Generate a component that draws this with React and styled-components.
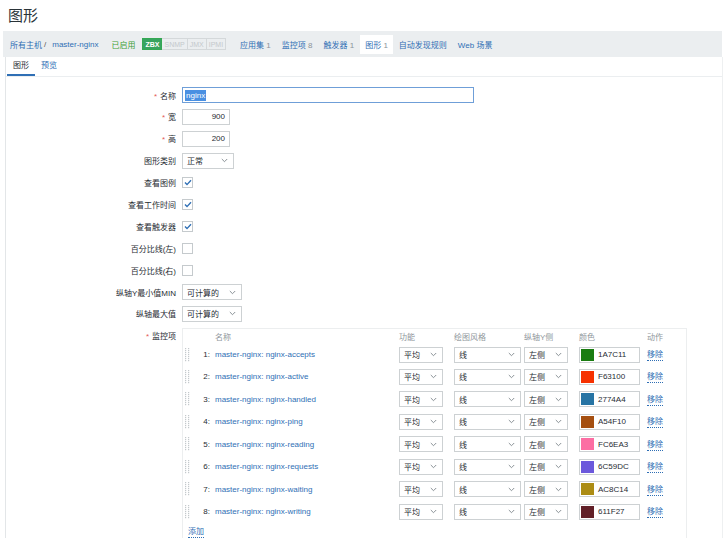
import React from "react";
import styled, { createGlobalStyle } from "styled-components";

const Global = createGlobalStyle`
  html, body { margin: 0; padding: 0; background: #ffffff; }
  body {
    font-family: "Liberation Sans", Arial, "Noto Sans CJK SC", sans-serif;
    font-size: 8px;
    color: #1f2c33;
    width: 725px;
    height: 538px;
    overflow: hidden;
  }
  * { box-sizing: border-box; }
`;

const Page = styled.div`
  width: 725px;
  height: 538px;
  overflow: hidden;
  display: flex;
  flex-direction: column;
  & > * { flex-shrink: 0; }
`;

const Title = styled.h1`
  margin: 0;
  height: 31px;
  padding: 7px 0 0 8px;
  font-size: 15px;
  line-height: 18px;
  font-weight: normal;
  color: #2a3338;
`;

const NavBar = styled.div`
  margin: 0 3px;
  height: 26px;
  background: #ebeef0;
  display: flex;
  align-items: center;
  padding-left: 7px;
  white-space: nowrap;
`;

const Crumb = styled.span`
  color: #2f6fb5;
`;

const Sep = styled.span`
  color: #555;
  margin: 0 6px 0 2px;
`;

const Status = styled.span`
  color: #3f9e3a;
  margin-left: 13px;
`;

const Badges = styled.div`
  display: flex;
  margin-left: 7px;
`;

const Badge = styled.span`
  height: 12px;
  line-height: 11px;
  padding: 0 2px;
  font-size: 7px;
  border: 1px solid ${(p) => (p.$on ? "#34a853" : "#d4d8da")};
  border-left-width: ${(p) => (p.$first ? "1px" : "0")};
  background: ${(p) => (p.$on ? "#37a460" : "transparent")};
  color: ${(p) => (p.$on ? "#ffffff" : "#c4c9cc")};
  font-weight: ${(p) => (p.$on ? "bold" : "normal")};
`;

const NavList = styled.div`
  display: flex;
  margin-left: 9px;
  gap: 1px;
`;

const NavItem = styled.span`
  padding: 4px 5px;
  color: #2f6fb5;
  background: ${(p) => (p.$active ? "#ffffff" : "transparent")};
  & b {
    font-weight: normal;
    color: #8a949a;
  }
`;

const Content = styled.div`
  flex: 1 0 auto;
  margin: 0 2px 0 5px;
  border-left: 1px solid #e3e6e8;
  border-right: 1px solid #eef0f1;
  display: flex;
  flex-direction: column;
`;

const Tabs = styled.div`
  display: flex;
  height: 20px;
  padding-left: 1px;
  border-bottom: 1px solid #ebeef0;
`;

const Tab = styled.span`
  padding: 0 6px;
  line-height: 18px;
  color: ${(p) => (p.$active ? "#1f2c33" : "#2f6fb5")};
  border-bottom: 2px solid ${(p) => (p.$active ? "#2f6fb5" : "transparent")};
`;

const Form = styled.div`
  display: flex;
  flex-direction: column;
  gap: 5.9px;
  padding-top: 10px;
`;

const Row = styled.div`
  display: grid;
  grid-template-columns: 170px 1fr;
  column-gap: 6px;
  align-items: ${(p) => (p.$top ? "start" : "center")};
  min-height: 16px;
`;

const Label = styled.label`
  text-align: right;
  color: #1f2c33;
  white-space: nowrap;
  padding-top: ${(p) => (p.$top ? "2px" : "0")};
`;

const Req = styled.span`
  color: #e45959;
  margin-right: 3px;
`;

const TextBox = styled.div`
  width: ${(p) => p.$w}px;
  height: 16px;
  border: 1px solid ${(p) => (p.$focus ? "#6f9fd8" : "#cdd1d3")};
  background: #fff;
  display: flex;
  align-items: center;
  justify-content: ${(p) => (p.$right ? "flex-end" : "flex-start")};
  padding: 0 4px;
  color: #1f2c33;
`;

const Selected = styled.span`
  background: #4a90e2;
  color: #ffffff;
  padding: 0 1px;
  line-height: 11px;
  margin-left: -2px;
`;

const SelectBox = styled.div`
  width: ${(p) => p.$w}px;
  height: 16px;
  border: 1px solid #cdd1d3;
  background: #fff;
  display: flex;
  align-items: center;
  justify-content: space-between;
  padding: 0 5px 0 4px;
  color: #1f2c33;
  white-space: nowrap;
`;

const Check = styled.div`
  width: 11px;
  height: 11px;
  border: 1px solid #c5cacd;
  background: #fff;
  display: flex;
  align-items: center;
  justify-content: center;
`;

const Table = styled.div`
  width: 505px;
  height: 230px;
  border: 1px solid #eceeef;
  border-bottom: none;
  padding: 1.5px 0 0 2px;
`;

const Grid = styled.div`
  display: grid;
  grid-template-columns: 10px 17px 187px 55px 70px 55px 68px 1fr;
  align-items: center;
  height: ${(p) => p.$h}px;
`;

const Head = styled.span`
  color: #8f979c;
  padding-left: ${(p) => p.$pl || 0}px;
`;

const Num = styled.span`
  text-align: right;
  padding-right: 2px;
  color: #1f2c33;
`;

const ItemLink = styled.span`
  color: #2f6fb5;
  padding-left: 3px;
  white-space: nowrap;
`;

const ColorField = styled.div`
  width: 61px;
  height: 16px;
  border: 1px solid #cdd1d3;
  display: flex;
  align-items: center;
  padding-left: 1px;
  gap: 4px;
  color: #1f2c33;
`;

const Swatch = styled.span`
  width: 13px;
  height: 12px;
  background: ${(p) => p.$c};
`;

const Remove = styled.span`
  color: #2f6fb5;
  border-bottom: 1px dotted #2f6fb5;
  justify-self: start;
  line-height: 10px;
  margin-top: 2px;
`;

const AddLink = styled.span`
  display: inline-block;
  color: #2f6fb5;
  border-bottom: 1px dotted #2f6fb5;
  margin: 4px 0 0 3px;
  line-height: 10px;
`;

const Chevron = () => (
  <svg width="7" height="5" viewBox="0 0 7 5">
    <polyline points="0.8,1 3.5,3.7 6.2,1" fill="none" stroke="#7d868b" strokeWidth="0.9" />
  </svg>
);

const Tick = () => (
  <svg width="8" height="7" viewBox="0 0 8 7">
    <polyline points="1,3.6 3,5.6 7,1.2" fill="none" stroke="#2f6fb5" strokeWidth="1.4" />
  </svg>
);

const Handle = () => (
  <svg width="5" height="14" viewBox="0 0 5 14">
    {Array.from({ length: 7 }).map((_, i) => (
      <g key={i} fill="#c4c9cc">
        <rect x="0" y={i * 2} width="1.2" height="1.2" />
        <rect x="3" y={i * 2} width="1.2" height="1.2" />
      </g>
    ))}
  </svg>
);

const Select = ({ w, children }) => (
  <SelectBox $w={w}>
    <span>{children}</span>
    <Chevron />
  </SelectBox>
);

const items = [
  ["1", "master-nginx: nginx-accepts", "1A7C11"],
  ["2", "master-nginx: nginx-active", "F63100"],
  ["3", "master-nginx: nginx-handled", "2774A4"],
  ["4", "master-nginx: nginx-ping", "A54F10"],
  ["5", "master-nginx: nginx-reading", "FC6EA3"],
  ["6", "master-nginx: nginx-requests", "6C59DC"],
  ["7", "master-nginx: nginx-waiting", "AC8C14"],
  ["8", "master-nginx: nginx-writing", "611F27"],
];

export default function App() {
  return (
    <Page>
      <Global />
      <Title>图形</Title>
      <NavBar>
        <Crumb>所有主机</Crumb>
        <Sep>/</Sep>
        <Crumb>master-nginx</Crumb>
        <Status>已启用</Status>
        <Badges>
          <Badge $on $first>ZBX</Badge>
          <Badge>SNMP</Badge>
          <Badge>JMX</Badge>
          <Badge>IPMI</Badge>
        </Badges>
        <NavList>
          <NavItem>应用集 <b>1</b></NavItem>
          <NavItem>监控项 <b>8</b></NavItem>
          <NavItem>触发器 <b>1</b></NavItem>
          <NavItem $active>图形 <b>1</b></NavItem>
          <NavItem>自动发现规则</NavItem>
          <NavItem>Web 场景</NavItem>
        </NavList>
      </NavBar>
      <Content>
        <Tabs>
          <Tab $active>图形</Tab>
          <Tab>预览</Tab>
        </Tabs>
        <Form>
          <Row>
            <Label><Req>*</Req>名称</Label>
            <TextBox $w={292} $focus><Selected>nginx</Selected></TextBox>
          </Row>
          <Row>
            <Label><Req>*</Req>宽</Label>
            <TextBox $w={48} $right>900</TextBox>
          </Row>
          <Row>
            <Label><Req>*</Req>高</Label>
            <TextBox $w={48} $right>200</TextBox>
          </Row>
          <Row>
            <Label>图形类别</Label>
            <Select w={52}>正常</Select>
          </Row>
          <Row>
            <Label>查看图例</Label>
            <Check><Tick /></Check>
          </Row>
          <Row>
            <Label>查看工作时间</Label>
            <Check><Tick /></Check>
          </Row>
          <Row>
            <Label>查看触发器</Label>
            <Check><Tick /></Check>
          </Row>
          <Row>
            <Label>百分比线(左)</Label>
            <Check />
          </Row>
          <Row>
            <Label>百分比线(右)</Label>
            <Check />
          </Row>
          <Row>
            <Label>纵轴Y最小值MIN</Label>
            <Select w={60}>可计算的</Select>
          </Row>
          <Row>
            <Label>纵轴最大值</Label>
            <Select w={60}>可计算的</Select>
          </Row>
          <Row $top>
            <Label $top><Req>*</Req>监控项</Label>
            <Table>
              <Grid $h={13}>
                <span />
                <span />
                <Head $pl={3}>名称</Head>
                <Head>功能</Head>
                <Head>绘图风格</Head>
                <Head>纵轴Y侧</Head>
                <Head>颜色</Head>
                <Head>动作</Head>
              </Grid>
              {items.map(([n, name, color]) => (
                <Grid $h={22.45} key={n}>
                  <Handle />
                  <Num>{n}:</Num>
                  <ItemLink>{name}</ItemLink>
                  <Select w={44}>平均</Select>
                  <Select w={67}>线</Select>
                  <Select w={44}>左侧</Select>
                  <ColorField>
                    <Swatch $c={`#${color}`} />
                    <span>{color}</span>
                  </ColorField>
                  <Remove>移除</Remove>
                </Grid>
              ))}
              <AddLink>添加</AddLink>
            </Table>
          </Row>
        </Form>
      </Content>
    </Page>
  );
}
